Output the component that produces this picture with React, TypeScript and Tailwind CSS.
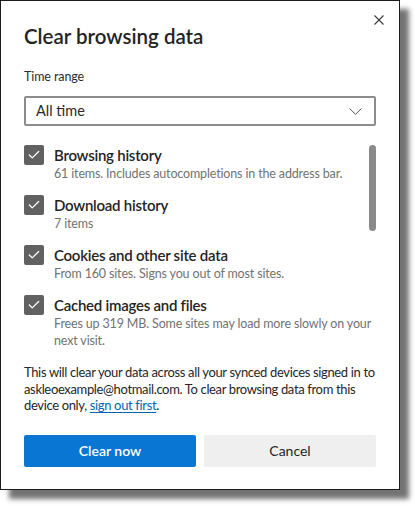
import { Check } from 'lucide-react'

const items = [
  { title: 'Browsing history', sub: '61 items. Includes autocompletions in the address bar.' },
  { title: 'Download history', sub: '7 items' },
  { title: 'Cookies and other site data', sub: 'From 160 sites. Signs you out of most sites.' },
  { title: 'Cached images and files', sub: 'Frees up 319 MB. Some sites may load more slowly on your next visit.' },
]

export default function App() {
  return (
    <div className="w-[415px] h-[506px] bg-white" style={{ fontFamily: 'Lato, "Open Sans", sans-serif' }}>
      <div className="relative w-[400px] h-[490px] bg-white border border-[#1c1c1c] shadow-[9px_9px_5px_rgba(0,0,0,0.55)] px-[23px] pt-[21px]">
        {/* close */}
        <button className="absolute right-[14px] top-[13px] w-[12px] h-[12px] flex items-center justify-center">
          <svg viewBox="0 0 12 12" className="w-[12px] h-[12px]">
            <path d="M1.5 1.5 L10.5 10.5 M10.5 1.5 L1.5 10.5" stroke="#3a3a3a" strokeWidth="1.1" fill="none" />
          </svg>
        </button>

        <h2 className="text-[20.5px] leading-[28px] font-semibold text-[#242424]">Clear browsing data</h2>

        <div className="mt-[18px] text-[12.5px] leading-[18px] text-[#2b2b2b] tracking-[-0.1px]">Time range</div>

        <div className="mt-[10px] h-[30px] w-[352px] border-2 border-[#8c8c8c] rounded-[2px] flex items-center justify-between pl-[10px] pr-[12px]">
          <span className="text-[14.5px] text-[#2b2b2b]">All time</span>
          <svg viewBox="0 0 13 7" className="w-[13px] h-[7px]">
            <path d="M0.5 0.5 L6.5 6.3 L12.5 0.5" stroke="#555" strokeWidth="1" fill="none" />
          </svg>
        </div>

        {/* checkbox list */}
        <div className="relative mt-[19px]">
          <div className="absolute right-0 top-0 w-[7px] h-[86px] rounded-full bg-[#8a8a8a]" />
          {items.map((it) => (
            <div key={it.title} className="flex gap-[10px] mb-[13px] last:mb-0">
              <div className="w-[20px] h-[20px] shrink-0 rounded-[2px] bg-[#616161] flex items-center justify-center">
                <Check size={14} strokeWidth={2.2} className="text-white" />
              </div>
              <div className="flex-1 pr-[4px]">
                <div className="text-[15px] leading-[20px] font-semibold text-[#242424] tracking-[-0.25px]">{it.title}</div>
                <div className="text-[12.5px] leading-[17px] text-[#727272] tracking-[-0.15px]">{it.sub}</div>
              </div>
            </div>
          ))}
        </div>

        <p className="mt-[15px] text-[13px] leading-[16.5px] text-[#262626] tracking-[-0.35px]">
          This will clear your data across all your synced devices signed in to askleoexample@hotmail.com. To clear
          browsing data from this device only,{' '}
          <a className="text-[#0066b4] underline underline-offset-2">sign out first</a>.
        </p>

        <div className="mt-[21px] flex gap-[8px]">
          <button className="w-[172px] h-[32px] rounded-[2px] bg-[#0a76d4] text-white text-[14px] font-semibold">
            Clear now
          </button>
          <button className="w-[172px] h-[32px] rounded-[2px] bg-[#efefef] text-[#242424] text-[14px]">Cancel</button>
        </div>
      </div>
    </div>
  )
}
